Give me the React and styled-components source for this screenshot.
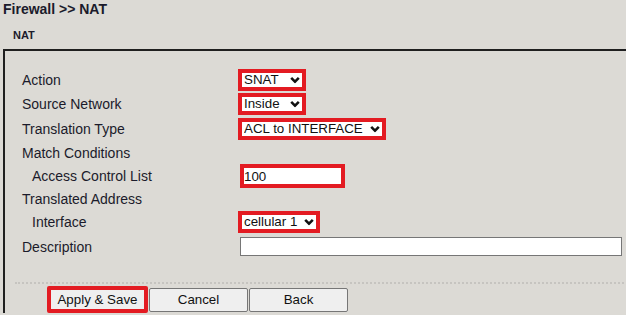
import React from 'react';
import styled, { createGlobalStyle } from 'styled-components';

const GlobalStyle = createGlobalStyle`
  html, body {
    margin: 0;
    padding: 0;
    background: #dcdad5;
    overflow: hidden;
  }
  body {
    font-family: "Liberation Sans", Arial, sans-serif;
    color: #1b1b2b;
  }
`;

const Page = styled.div`
  width: 626px;
  height: 315px;
  overflow: hidden;
`;

const Title = styled.h1`
  margin: 0;
  padding: 1px 0 0 3px;
  font-size: 14px;
  line-height: 16px;
  font-weight: bold;
  color: #1b1b2b;
`;

const SectionName = styled.h2`
  margin: 12px 0 0;
  padding-left: 13px;
  font-size: 11px;
  line-height: 13px;
  font-weight: bold;
  color: #1b1b2b;
`;

const Panel = styled.div`
  margin: 7px 0 0 3px;
  padding-top: 17px;
  border-top: 2px solid #1f1f1f;
  border-left: 2px solid #1f1f1f;
`;

const Row = styled.div`
  display: grid;
  grid-template-columns: 233px 1fr;
  align-items: center;
  height: ${({ $h }) => $h}px;
`;

const Label = styled.label`
  padding-left: ${({ $indent }) => ($indent ? 27 : 17)}px;
  font-size: 14px;
  line-height: 16px;
  color: #1b1b2b;
`;

const Field = styled.div`
  display: flex;
  align-items: center;
`;

const SelectBox = styled.span`
  position: relative;
  display: inline-block;
  height: 22px;
`;

const Select = styled.select`
  appearance: none;
  -webkit-appearance: none;
  box-sizing: border-box;
  width: ${({ $w }) => $w}px;
  height: 22px;
  margin: 0;
  padding: 0 0 0 2px;
  border: 4px solid #e31b22;
  border-radius: 0;
  background: #fff;
  color: #111;
  font-family: "Liberation Sans", Arial, sans-serif;
  font-size: 13.333px;
  line-height: 14px;
  outline: none;
`;

const Chevron = styled.svg`
  position: absolute;
  right: 6px;
  top: 50%;
  transform: translateY(-50%);
  pointer-events: none;
`;

const TextInput = styled.input`
  box-sizing: border-box;
  width: ${({ $w }) => $w}px;
  height: ${({ $hl }) => ($hl ? 24 : 19)}px;
  margin: 0 0 0 2px;
  padding: 0;
  border: ${({ $hl }) => ($hl ? '4px solid #e31b22' : '1px solid #767676')};
  border-radius: 0;
  background: #fff;
  color: #111;
  font-family: "Liberation Sans", Arial, sans-serif;
  font-size: 13.333px;
  outline: none;
`;

const Divider = styled.div`
  margin: 23px 2px 0 10px;
  border-top: 2px dotted #c6c4c0;
`;

const ButtonRow = styled.div`
  display: flex;
  align-items: center;
  gap: 1px;
  height: 27px;
  margin: 2px 0 0 42px;
`;

const Button = styled.button`
  box-sizing: border-box;
  width: ${({ $hl }) => ($hl ? 101 : 99)}px;
  height: ${({ $hl }) => ($hl ? 27 : 24)}px;
  margin: 0;
  padding: 0;
  border: ${({ $hl }) => ($hl ? '4px solid #e31b22' : '1px solid #767676')};
  border-radius: 2px;
  background: #efefef;
  color: #111;
  font-family: "Liberation Sans", Arial, sans-serif;
  font-size: 13.333px;
  cursor: pointer;
`;

const Dropdown = ({ width, value, options }) => (
  <SelectBox>
    <Select $w={width} defaultValue={value}>
      {options.map((o) => (
        <option key={o}>{o}</option>
      ))}
    </Select>
    <Chevron width="10" height="7" viewBox="0 0 10 7">
      <path d="M1.2 1.3 L5 5.2 L8.8 1.3" fill="none" stroke="#111" strokeWidth="2.5" />
    </Chevron>
  </SelectBox>
);

export default function App() {
  return (
    <Page>
      <GlobalStyle />
      <Title>Firewall &gt;&gt; NAT</Title>
      <SectionName>NAT</SectionName>
      <Panel>
        <Row $h={24}>
          <Label>Action</Label>
          <Field>
            <Dropdown width={68} value="SNAT" options={['SNAT', 'DNAT']} />
          </Field>
        </Row>
        <Row $h={24}>
          <Label>Source Network</Label>
          <Field>
            <Dropdown width={68} value="Inside" options={['Inside', 'Outside']} />
          </Field>
        </Row>
        <Row $h={25}>
          <Label>Translation Type</Label>
          <Field>
            <Dropdown width={148} value="ACL to INTERFACE" options={['ACL to INTERFACE', 'IP to IP']} />
          </Field>
        </Row>
        <Row $h={23}>
          <Label>Match Conditions</Label>
        </Row>
        <Row $h={23}>
          <Label $indent>Access Control List</Label>
          <Field>
            <TextInput $hl $w={105} defaultValue="100" />
          </Field>
        </Row>
        <Row $h={23}>
          <Label>Translated Address</Label>
        </Row>
        <Row $h={24}>
          <Label $indent>Interface</Label>
          <Field>
            <Dropdown width={82} value="cellular 1" options={['cellular 1', 'cellular 2']} />
          </Field>
        </Row>
        <Row $h={25}>
          <Label>Description</Label>
          <Field>
            <TextInput $w={382} defaultValue="" />
          </Field>
        </Row>
        <Divider />
        <ButtonRow>
          <Button $hl>Apply &amp; Save</Button>
          <Button>Cancel</Button>
          <Button>Back</Button>
        </ButtonRow>
      </Panel>
    </Page>
  );
}
